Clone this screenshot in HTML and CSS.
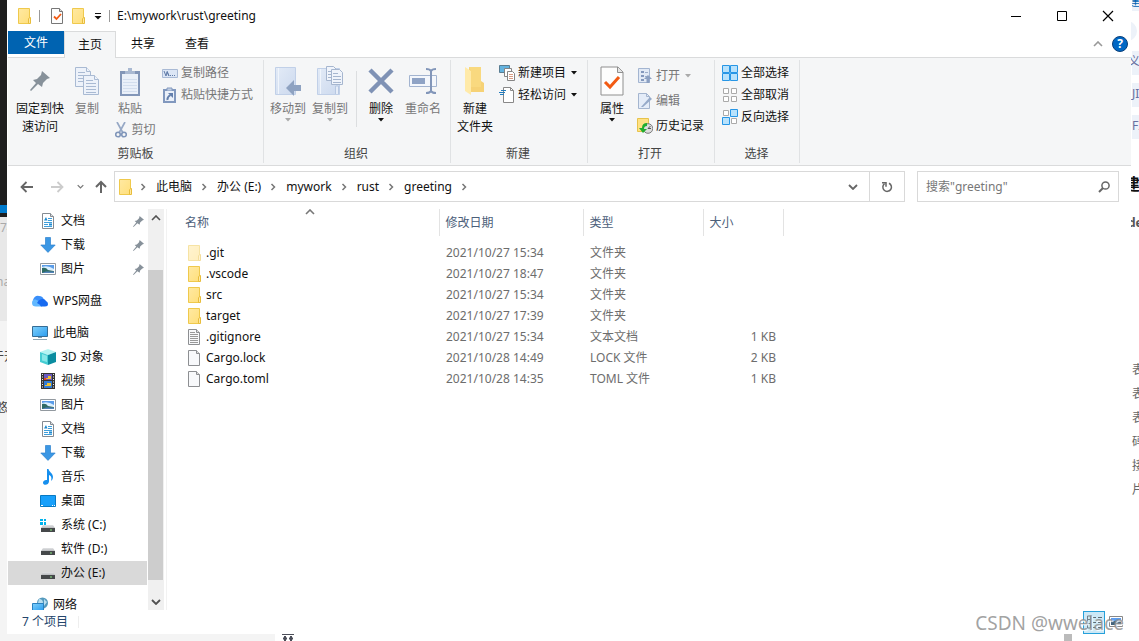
FILE: index.html
```html
<!DOCTYPE html>
<html lang="zh-CN">
<head>
<meta charset="utf-8">
<title>E:\mywork\rust\greeting</title>
<link rel="stylesheet" href="styles.css">
</head>
<body>
<svg class="defs" aria-hidden="true">
  <defs>
    <linearGradient id="gFolder" x1="0" y1="0" x2="1" y2="1"><stop offset="0" stop-color="#ffe9a2"/><stop offset="1" stop-color="#ffdf7b"/></linearGradient>
    <linearGradient id="gBlue" x1="0" y1="0" x2="1" y2="1"><stop offset="0" stop-color="#7fd0fb"/><stop offset="1" stop-color="#2a9df0"/></linearGradient>
    <linearGradient id="gPale" x1="0" y1="0" x2="1" y2="1"><stop offset="0" stop-color="#e3ebf7"/><stop offset="1" stop-color="#ccd9ee"/></linearGradient>
    <linearGradient id="gDrive" x1="0" y1="0" x2="0" y2="1"><stop offset="0" stop-color="#e2e3e5"/><stop offset="1" stop-color="#b9bbbe"/></linearGradient>
    <symbol id="folder" viewBox="0 0 14 16"><path d="M.5.5h11v15H.5z" fill="url(#gFolder)" stroke="#efc94c"/><path d="M10.5 15.500V11l1-1.500h1v6z" fill="#ffe9a2" stroke="#e8bd3c"/></symbol>
    <symbol id="page" viewBox="0 0 14 16"><path d="M.5.5h8l3 3v12H.5z" fill="#f8f9fb" stroke="#8d8f92"/><path d="M8.500.5v3h3" fill="#ddd" stroke="#8d8f92"/></symbol>
    <symbol id="text" viewBox="0 0 14 16"><use href="#page"/><path d="M2 5.500h8M2 7.500h8M2 9.500h8M2 11.500h8M2 13.500h8M2 3.500h5" stroke="#999"/></symbol>
    <symbol id="check" viewBox="0 0 24 30"><path d="M1 1h17l5 5v23H1z" fill="#fdfdfd" stroke="#8f8f8f"/><path d="M17.500 1v5.500H23" fill="#e4e4e4" stroke="#8f8f8f"/><path d="m5 16 5 5 9-10" fill="none" stroke="#f25a13" stroke-width="3"/></symbol>
    <symbol id="quickcheck" viewBox="0 0 14 16"><path d="M1.500.5h8l3 3v12h-11z" fill="#fdfdfd" stroke="#777"/><path d="M9.500.5v3h3" fill="#ddd" stroke="#777"/><path d="m4 8.500 2.500 2.500L11 6" fill="none" stroke="#f25a13" stroke-width="1.800"/></symbol>
    <symbol id="doc" viewBox="0 0 16 16"><path d="M2.500.5h8l3 3v12h-11z" fill="#fff" stroke="#858b92"/><path d="M10.500.5v3h3" fill="#ddd" stroke="#858b92"/><path d="M8 5.500h4M8 7.500h4M4 9.500h8M4 11.500h4M4 13.500h8" stroke="#3e9edb"/><path d="M4 7.500 6 4l1.500 3.500M9 10.500h3v2H9z" fill="#1d8ad0"/></symbol>
    <symbol id="down" viewBox="0 0 16 16"><path d="M5.500.5h5V8h4.700L8 15.400.8 8h4.700z" fill="#3b97e4" stroke="#2e83ce" stroke-width=".7"/></symbol>
    <symbol id="pic" viewBox="0 0 16 16"><path d="M.5 2.500h15v11H.5z" fill="#fff" stroke="#92999f"/><path d="M2 4h12v4H2z" fill="#5a9ce8"/><path d="M2 6q6-2 12 2v1H2z" fill="#d9efff"/><path d="M2 7q4-1 6 2l6 1v2H2z" fill="#2f6b65"/><path d="M6 10.500h8V12H2z" fill="#5384ba"/></symbol>
    <symbol id="cloud" viewBox="0 0 16 16"><path d="M1 7q2-5 6-4 4 0 5 4l-4 5-7-1z" fill="#3a8ffa"/><path d="M0 10q0-4 3.500-3.500Q7 7 10 13.500H4Q0 13.500 0 10Z" fill="#62b8ff"/><path d="M5 10q2-4 6-4 2 0 3 2 2 1 2 3 0 2.500-3 2.500H9Q8 11 5 10Z" fill="#176af0"/></symbol>
    <symbol id="pc" viewBox="0 0 16 16"><path d="M.5 1.500h15v10H.5z" fill="url(#gBlue)" stroke="#356c95"/><path d="M6 12h4v1H6z" fill="#7a9db1"/><path d="M1 14.500h14" stroke="#8fa7b5"/></symbol>
    <symbol id="cube" viewBox="0 0 16 16"><path d="m0 3 8-3 8 3-8 3z" fill="#b5f4f2"/><path d="m0 3 8 3v10l-8-3z" fill="#45cdd3"/><path d="m16 3-8 3v10l8-3z" fill="#0a8da0"/><path d="m2 5 5 1.700V13l-5-1.500z" fill="#87e8e8"/></symbol>
    <symbol id="film" viewBox="0 0 16 16"><path d="M1 0h14v16H1z" fill="#343434"/><path d="M4 1h8v6H4z" fill="#6a5ac1"/><path d="M4 8h8v7H4z" fill="#307bd5"/><path d="M5 5h3V3h3v3H5zM5 12h2v-2h4v3H5z" fill="#f0c22f"/><path d="M4 5h2l1 2H4z" fill="#db4333"/><path d="M2.500 1v14M13.500 1v14" stroke="#eee" stroke-dasharray="1 1.500"/></symbol>
    <symbol id="note" viewBox="0 0 16 16"><path d="M7 0h1.500c.5 3 4.500 4 4.500 8 0 2-1 3-2 4 1-4 0-5-2-6v6.500C9 15 6 16.500 4 15.500c-2-1-1-5 3-4.500z" fill="#168fee"/></symbol>
    <symbol id="desk" viewBox="0 0 16 16"><path d="M.5 2.500h15v11H.5z" fill="#18a0fb" stroke="#0879c2"/><path d="M1 12.500h2M12 12.500h1M14 12.500h1" stroke="#fff"/></symbol>
    <symbol id="drive" viewBox="0 0 16 16"><path d="m3 7-2 3h14l-2-3z" fill="url(#gDrive)"/><path d="M1 10h14v4H1z" fill="#45484a"/><path d="M10 12h2" stroke="#8ce883"/></symbol>
    <symbol id="sysdrive" viewBox="0 0 16 16"><use href="#drive" y="1"/><path d="M0 2h3v2H0zM4 2h2v2H4zM0 5h3v3H0zM4 5h2v3H4z" fill="#00b2ec"/></symbol>
    <symbol id="net" viewBox="0 0 16 16"><circle cx="10.500" cy="6" r="5.500" fill="#5499bd"/><path d="M7 2q4 0 4 4H6M12 2l3 3-3 4" fill="#b9def0"/><path d="M.5 6.500h11v7H.5z" fill="url(#gBlue)" stroke="#2a81c0"/><path d="M4 15h4" stroke="#6e96af"/></symbol>
    <symbol id="pin" viewBox="0 0 20 20"><path d="m12 0 8 7-3 1-4 4-1 4-4-3-7 7-1-1 6-7-3-3 4-1 4-4z" fill="#87919a"/></symbol>
    <symbol id="copy" viewBox="0 0 24 28"><g fill="#edf2fa" stroke="#a9bad3"><path d="M.5.5h11l4 4v15H.5z"/><path d="M11.500.5v4h4M3 5.500h7M3 8.500h9M3 11.500h9M3 14.500h9"/><path d="M8.500 8.500h11l4 4v15h-15z"/><path d="M19.500 8.500v4h4M11 13.500h7M11 16.500h10M11 19.500h10M11 22.500h10M11 25.500h10"/></g></symbol>
    <symbol id="paste" viewBox="0 0 20 29"><path d="M0 4h20v25H0z" fill="#8296b8"/><path d="M2 7h16v20H2z" fill="#eaf0f9"/><path d="M3 12.500h14M3 15.500h14M3 18.500h14M3 21.500h14M3 24.500h14" stroke="#d3deee"/><path d="M5 7V4h3V1h4v3h3v3z" fill="#a9b9d2"/></symbol>
    <symbol id="cut" viewBox="0 0 12 16"><path d="m2 0 6 11M10 0 4 11" stroke="#96a8c5" stroke-width="1.700"/><circle cx="3" cy="12.500" r="2.300" fill="none" stroke="#8096ba" stroke-width="1.600"/><circle cx="9" cy="12.500" r="2.300" fill="none" stroke="#8096ba" stroke-width="1.600"/></symbol>
    <symbol id="path" viewBox="0 0 16 16"><path d="M.5 4.500h15v8H.5z" fill="#dce6f5" stroke="#a9bad5"/><path d="m2 6 2 5 1-4 2 4M5 6l2 5" fill="none" stroke="#607ba7"/><path d="M8 10.500h6" stroke="#607ba7" stroke-dasharray="1 1"/></symbol>
    <symbol id="shortcut" viewBox="0 0 16 16"><path d="M2 3h11v12H2z" fill="#eaf0f9" stroke="#8198be" stroke-width="2"/><path d="M5 3.500V1h5v2.500" fill="#c1cee2" stroke="#8198be"/><path d="M5.500 13q-.5-3 3-5" fill="none" stroke="#637fac" stroke-width="2"/><path d="M6 6h5v5z" fill="#637fac"/></symbol>
    <symbol id="move" viewBox="0 0 28 30"><path d="M1.500 1.500h20v27h-20z" fill="url(#gPale)" stroke="#c1d0e8"/><path d="M4.500 2v26" stroke="#f0f5fc"/><path d="m12 22 8-8v5h7v6h-7v5z" fill="#8ea2c1"/></symbol>
    <symbol id="copyto" viewBox="0 0 28 30"><path d="M1.500 2.500h22v26h-22z" fill="url(#gPale)" stroke="#c1d0e8"/><path d="M4.500 3v25" stroke="#f0f5fc"/><path d="M19.500 28V20h3v8" fill="#e6edf8" stroke="#b7c8e2"/><g fill="#f0f4fb" stroke="#a6b6cf"><path d="M10.500.5h7l3 3v11h-10z"/><path d="M15.500 3.500h8l3 3v12h-11z"/><path d="M17 7.500h5M17 10.500h8M17 13.500h8M17 16.500h8M12 5.500h3M12 8.500h3M12 11.500h3"/></g></symbol>
    <symbol id="delete" viewBox="0 0 26 26"><path d="m2 2 22 22M24 2 2 24" stroke="#7f92b5" stroke-width="4.500"/></symbol>
    <symbol id="rename" viewBox="0 0 28 28"><path d="M.5 8.500h27v11H.5z" fill="#f4f7fc" stroke="#a3b4d0"/><path d="M3 11h13v6H3z" fill="#8fa3c5"/><path d="M17 2q4 0 5 2 1-2 5-2M22 3v22M17 26q4 0 5-2 1 2 5 2" fill="none" stroke="#8296b9" stroke-width="2"/></symbol>
    <symbol id="bigfolder" viewBox="0 0 20 28"><path d="M4 0h12v14l3 2v9H4z" fill="#f6d276"/><path d="m0 0 6 4v24l-6-4z" fill="#ffeaa9"/><path d="M4 0h12v20H6V4z" fill="#f9d97f"/></symbol>
    <symbol id="newitem" viewBox="0 0 16 16"><path d="M.5.5h10v7H.5z" fill="#64b3df" stroke="#597d92"/><path d="M5.500 3.500h7v8h-7z" fill="#fff" stroke="#858585"/><path d="M8.500 6.500h5l2 2v7h-7z" fill="#fff" stroke="#858585"/><path d="M10 9.500h4M10 11.500h4M10 13.500h4" stroke="#d89b83"/></symbol>
    <symbol id="access" viewBox="0 0 16 16"><path d="M4.500.5h7l3 3v12h-10z" fill="#fff" stroke="#888"/><path d="M11.500.5v3h3" fill="none" stroke="#888"/><path d="M2 3.500h5M0 5.500h6M1 7.500h4" stroke="#237cbd"/></symbol>
    <symbol id="open" viewBox="0 0 16 16"><path d="M1.500.5h11v14h-11z" fill="#e1e9f5" stroke="#a3b5d1"/><path d="M4 3h3v2H4zM4 7h3v2H4zM4 11h3v2H4z" fill="#8398bc"/><path d="M8 4.500h3M8 8.500h2" stroke="#9badc9"/><path d="m11 7 4 4h-2.500v4h-3v-4H7z" fill="#8ba0c2"/></symbol>
    <symbol id="edit" viewBox="0 0 16 16"><path d="M1.500.5h8l3 3v12h-11z" fill="#e4ecf8" stroke="#a4b5cf"/><path d="M9.500.5v3h3" fill="none" stroke="#a4b5cf"/><path d="m4 14 9-10 2 2-9 8z" fill="#96aac9"/></symbol>
    <symbol id="history" viewBox="0 0 16 16"><path d="M.5.5h11v13H.5z" fill="#ffe184" stroke="#e7c34b"/><circle cx="11" cy="10.500" r="4.800" fill="#ddd" stroke="#7b7b7b"/><path d="M11 10.500 13.500 8M11 10.500h3" fill="none" stroke="#555"/><path d="M10 5q-5 0-5 5H2l4 5 4-4H7q0-3 3-3z" fill="#22ad2f"/></symbol>
    <symbol id="all" viewBox="0 0 16 16"><g fill="#b8e2fc" stroke="#2796e6"><path d="M.5.5h7v7h-7zM8.500.5h7v7h-7zM.5 8.500h7v7h-7zM8.500 8.500h7v7h-7z"/></g></symbol>
    <symbol id="none" viewBox="0 0 16 16"><g fill="#fff" stroke="#aaa"><path d="M1.500 1.500h5v5h-5zM9.500 1.500h5v5h-5zM1.500 9.500h5v5h-5zM9.500 9.500h5v5h-5z"/></g></symbol>
    <symbol id="invert" viewBox="0 0 16 16"><g fill="#fff" stroke="#aaa"><path d="M1.500 1.500h5v5h-5zM9.500 9.500h5v5h-5z"/></g><g fill="#b8e2fc" stroke="#2796e6"><path d="M8.500.5h7v7h-7zM.5 8.500h7v7h-7z"/></g></symbol>
    <symbol id="caret" viewBox="0 0 6 4"><path d="M0 0h6L3 3.500z" fill="currentColor"/></symbol>
    <symbol id="chev" viewBox="0 0 8 8"><path d="m2.500 1 3 3-3 3" fill="none" stroke="currentColor" stroke-width="1.500"/></symbol>
    <symbol id="vee" viewBox="0 0 10 6"><path d="m1 1 4 4 4-4" fill="none" stroke="currentColor" stroke-width="1.800"/></symbol>
    <symbol id="peak" viewBox="0 0 10 6"><path d="m1 5 4-4 4 4" fill="none" stroke="currentColor" stroke-width="1.600"/></symbol>
    <symbol id="arrow" viewBox="0 0 14 12"><path d="M13 6H2M6.500 1 1.500 6l5 5" fill="none" stroke="currentColor" stroke-width="1.800"/></symbol>
    <symbol id="up" viewBox="0 0 12 14"><path d="M6 13V2M1 7l5-5 5 5" fill="none" stroke="currentColor" stroke-width="2"/></symbol>
  </defs>
</svg>

<div class="desktop">
  <div class="behind-left" aria-hidden="true">
    <div class="editor"></div><div class="editor-bar"></div><div class="editor-foot"></div>
    <div class="note-panel"><span class="frag">74</span><span class="frag frag-low">na</span></div>
    <div class="page-panel"><span class="frag frag-half">于开</span><span class="frag frag-next">悠</span></div>
  </div>

  <main class="window">
    <header class="titlebar">
      <svg class="i14"><use href="#folder"/></svg>
      <span class="bar"></span>
      <button class="quick" aria-label="属性"><svg class="i14"><use href="#quickcheck"/></svg></button>
      <button class="quick" aria-label="新建文件夹"><svg class="i14"><use href="#folder"/></svg></button>
      <button class="quick-more" aria-label="自定义快速访问工具栏"><svg width="8" height="8" viewBox="0 0 8 8"><path d="M1 1.500h6" stroke="#111"/><path d="M.5 4h7L4 7.500z" fill="#111"/></svg></button>
      <span class="bar"></span>
      <h1 class="title">E:\mywork\rust\greeting</h1>
      <div class="win-buttons">
        <button aria-label="最小化"><svg width="12" height="12"><path d="M1 6.500h10" stroke="#000"/></svg></button>
        <button aria-label="最大化"><svg width="12" height="12"><path d="M1.500 1.500h9v9h-9z" fill="none" stroke="#000"/></svg></button>
        <button aria-label="关闭"><svg width="12" height="12"><path d="m1 1 10 10M11 1 1 11" stroke="#000" stroke-width="1.200"/></svg></button>
      </div>
    </header>

    <nav class="tabs">
      <button class="tab tab-file">文件</button>
      <button class="tab tab-on">主页</button>
      <button class="tab">共享</button>
      <button class="tab">查看</button>
      <div class="tabs-end">
        <button aria-label="最小化功能区"><svg class="collapse" width="10" height="6"><use href="#peak"/></svg></button>
        <button class="help" aria-label="帮助">?</button>
      </div>
    </nav>

    <section class="ribbon">
      <div class="group g-clip">
        <div class="tools">
          <button class="big"><span class="pic"><svg width="20" height="20"><use href="#pin"/></svg></span>固定到快<br>速访问</button>
          <button class="big off"><span class="pic"><svg width="24" height="28"><use href="#copy"/></svg></span>复制</button>
          <div class="stack-paste">
            <button class="big off"><span class="pic"><svg width="20" height="29"><use href="#paste"/></svg></span>粘贴</button>
            <button class="small off cut"><svg width="12" height="16"><use href="#cut"/></svg>剪切</button>
          </div>
          <div class="stack">
            <button class="small off"><svg class="i16"><use href="#path"/></svg>复制路径</button>
            <button class="small off"><svg class="i16"><use href="#shortcut"/></svg>粘贴快捷方式</button>
          </div>
        </div>
        <div class="group-name">剪贴板</div>
      </div>
      <div class="group g-org">
        <div class="tools">
          <button class="big off"><span class="pic"><svg width="28" height="30"><use href="#move"/></svg></span>移动到<svg class="caret"><use href="#caret"/></svg></button>
          <button class="big off"><span class="pic"><svg width="28" height="30"><use href="#copyto"/></svg></span>复制到<svg class="caret"><use href="#caret"/></svg></button>
          <span class="split"></span>
          <button class="big"><span class="pic"><svg width="26" height="26"><use href="#delete"/></svg></span>删除<svg class="caret"><use href="#caret"/></svg></button>
          <button class="big off"><span class="pic"><svg width="28" height="28"><use href="#rename"/></svg></span>重命名</button>
        </div>
        <div class="group-name">组织</div>
      </div>
      <div class="group g-new">
        <div class="tools">
          <button class="big"><span class="pic"><svg width="20" height="28"><use href="#bigfolder"/></svg></span>新建<br>文件夹</button>
          <div class="stack">
            <button class="small"><svg class="i16"><use href="#newitem"/></svg>新建项目<svg class="caret"><use href="#caret"/></svg></button>
            <button class="small"><svg class="i16"><use href="#access"/></svg>轻松访问<svg class="caret"><use href="#caret"/></svg></button>
          </div>
        </div>
        <div class="group-name">新建</div>
      </div>
      <div class="group g-open">
        <div class="tools">
          <button class="big"><span class="pic"><svg width="24" height="30"><use href="#check"/></svg></span>属性<svg class="caret"><use href="#caret"/></svg></button>
          <div class="stack stack-wide">
            <button class="small off"><svg class="i16"><use href="#open"/></svg>打开<svg class="caret"><use href="#caret"/></svg></button>
            <button class="small off"><svg class="i16"><use href="#edit"/></svg>编辑</button>
            <button class="small"><svg class="i16"><use href="#history"/></svg>历史记录</button>
          </div>
        </div>
        <div class="group-name">打开</div>
      </div>
      <div class="group g-select">
        <div class="tools">
          <div class="stack">
            <button class="small"><svg class="i16"><use href="#all"/></svg>全部选择</button>
            <button class="small"><svg class="i16"><use href="#none"/></svg>全部取消</button>
            <button class="small"><svg class="i16"><use href="#invert"/></svg>反向选择</button>
          </div>
        </div>
        <div class="group-name">选择</div>
      </div>
    </section>

    <div class="navbar">
      <button class="nav" aria-label="后退"><svg width="14" height="12"><use href="#arrow"/></svg></button>
      <button class="nav nav-off" aria-label="前进"><svg class="flip" width="14" height="12"><use href="#arrow"/></svg></button>
      <button class="nav-recent" aria-label="最近浏览的位置"><svg width="7" height="5"><use href="#vee"/></svg></button>
      <button class="nav-up" aria-label="上移"><svg width="12" height="14"><use href="#up"/></svg></button>
      <div class="address">
        <svg class="i14"><use href="#folder"/></svg>
        <svg class="sep sep-first"><use href="#chev"/></svg><button>此电脑</button>
        <svg class="sep"><use href="#chev"/></svg><button>办公 (E:)</button>
        <svg class="sep"><use href="#chev"/></svg><button>mywork</button>
        <svg class="sep"><use href="#chev"/></svg><button>rust</button>
        <svg class="sep"><use href="#chev"/></svg><button>greeting</button>
        <svg class="sep"><use href="#chev"/></svg>
        <button class="addr-drop" aria-label="以前的位置"><svg width="10" height="6"><use href="#vee"/></svg></button>
        <button class="refresh" aria-label="刷新"><svg width="12" height="12" viewBox="0 0 12 12"><path d="M8 2.200a4.300 4.300 0 1 1-4.500.5" fill="none" stroke="#666" stroke-width="1.500"/><path d="M1 1.700h4v4" fill="none" stroke="#666" stroke-width="1.500"/></svg></button>
      </div>
      <label class="search">
        <input type="text" placeholder="搜索&quot;greeting&quot;" aria-label="搜索">
        <svg width="12" height="12" viewBox="0 0 12 12"><circle cx="7.500" cy="4.500" r="3.600" fill="none" stroke="#666" stroke-width="1.500"/><path d="m5 7-4 4" stroke="#666" stroke-width="2"/></svg>
      </label>
    </div>

    <div class="content">
      <nav class="tree">
        <a href="#" class="node sub"><svg class="i16"><use href="#doc"/></svg>文档<svg class="pinned"><use href="#pin"/></svg></a>
        <a href="#" class="node sub"><svg class="i16"><use href="#down"/></svg>下载<svg class="pinned"><use href="#pin"/></svg></a>
        <a href="#" class="node sub"><svg class="i16"><use href="#pic"/></svg>图片<svg class="pinned"><use href="#pin"/></svg></a>
        <a href="#" class="node root"><svg class="i16"><use href="#cloud"/></svg>WPS网盘</a>
        <a href="#" class="node root"><svg class="i16"><use href="#pc"/></svg>此电脑</a>
        <a href="#" class="node sub"><svg class="i16"><use href="#cube"/></svg>3D 对象</a>
        <a href="#" class="node sub"><svg class="i16"><use href="#film"/></svg>视频</a>
        <a href="#" class="node sub"><svg class="i16"><use href="#pic"/></svg>图片</a>
        <a href="#" class="node sub"><svg class="i16"><use href="#doc"/></svg>文档</a>
        <a href="#" class="node sub"><svg class="i16"><use href="#down"/></svg>下载</a>
        <a href="#" class="node sub"><svg class="i16"><use href="#note"/></svg>音乐</a>
        <a href="#" class="node sub"><svg class="i16"><use href="#desk"/></svg>桌面</a>
        <a href="#" class="node sub"><svg class="i16"><use href="#sysdrive"/></svg>系统 (C:)</a>
        <a href="#" class="node sub"><svg class="i16"><use href="#drive"/></svg>软件 (D:)</a>
        <a href="#" class="node sub node-on"><svg class="i16"><use href="#drive"/></svg>办公 (E:)</a>
        <a href="#" class="node root"><svg class="i16"><use href="#net"/></svg>网络</a>
      </nav>
      <div class="scroll">
        <button aria-label="向上滚动"><svg width="10" height="6"><use href="#peak"/></svg></button>
        <div class="track"></div><div class="thumb"></div><div class="rest"></div>
        <button aria-label="向下滚动"><svg width="10" height="6"><use href="#vee"/></svg></button>
      </div>
      <div class="files">
        <svg class="sort" width="10" height="6"><use href="#peak"/></svg>
        <table>
          <thead><tr><th class="c-name">名称</th><th class="c-date">修改日期</th><th class="c-type">类型</th><th class="c-size">大小</th></tr></thead>
          <tbody>
            <tr><td class="name"><svg class="i14 hidden-item"><use href="#folder"/></svg>.git</td><td>2021/10/27 15:34</td><td>文件夹</td><td class="size"></td></tr>
            <tr><td class="name"><svg class="i14"><use href="#folder"/></svg>.vscode</td><td>2021/10/27 18:47</td><td>文件夹</td><td class="size"></td></tr>
            <tr><td class="name"><svg class="i14"><use href="#folder"/></svg>src</td><td>2021/10/27 15:34</td><td>文件夹</td><td class="size"></td></tr>
            <tr><td class="name"><svg class="i14"><use href="#folder"/></svg>target</td><td>2021/10/27 17:39</td><td>文件夹</td><td class="size"></td></tr>
            <tr><td class="name"><svg class="i14"><use href="#text"/></svg>.gitignore</td><td>2021/10/27 15:34</td><td>文本文档</td><td class="size">1 KB</td></tr>
            <tr><td class="name"><svg class="i14"><use href="#page"/></svg>Cargo.lock</td><td>2021/10/28 14:49</td><td>LOCK 文件</td><td class="size">2 KB</td></tr>
            <tr><td class="name"><svg class="i14"><use href="#page"/></svg>Cargo.toml</td><td>2021/10/28 14:35</td><td>TOML 文件</td><td class="size">1 KB</td></tr>
          </tbody>
        </table>
      </div>
    </div>

    <footer class="status">
      <span class="count">7 个项目</span>
      <div class="views">
        <button class="view-on" aria-label="详细信息"><svg width="16" height="14"><path d="M1.500 1v12h3V1zM1 4.500h4M1 8.500h4" fill="none" stroke="#70818b"/><path d="M7 2.500h3M12 2.500h4M7 7.500h3M12 7.500h4M7 12.500h3M12 12.500h4" stroke="#5b6a73"/></svg></button>
        <button aria-label="大缩略图"><svg width="14" height="12"><path d="M.5.5h13v10H.5z" fill="#fff" stroke="#888"/><path d="M2 2h10v3H2z" fill="#5c9df0"/><path d="M2 5h10v4H2z" fill="#44637b"/></svg></button>
      </div>
    </footer>
  </main>

  <div class="behind-right" aria-hidden="true">
    <span class="chip chip-top">建</span><span class="dot"></span>
    <span class="chip">义</span><span class="chip chip-latin">JI</span><span class="chip chip-latin">FI</span>
    <span class="heading">建</span><span class="author">de</span>
    <span class="item item-first">表</span><span class="item">表</span><span class="item">表</span><span class="item">码</span><span class="item">接</span><span class="item">片</span>
  </div>

  <div class="behind-bottom" aria-hidden="true">
    <div class="bottom-page"></div>
    <svg width="14" height="7"><path d="M1 .5h12" stroke="#4a4d58"/><path d="M4 2v5M10 2v5M2 4.500h4M8 4.500h4" stroke="#4a4d58" stroke-width="2"/></svg>
    <div class="bottom-thumb"></div>
  </div>
  <div class="watermark">CSDN @wwelace</div>
</div>
</body>
</html>
```
FILE: styles.css
```css
* { box-sizing: border-box; }
body {
  margin: 0;
  font: 12px/18px "Noto Sans", "Noto Sans CJK SC", sans-serif;
  color: #111;
  background: #fff;
}
button {
  margin: 0;
  padding: 0;
  border: 0;
  background: none;
  color: inherit;
  font: inherit;
}
svg { display: block; flex: none; }
.defs { position: absolute; width: 0; height: 0; }
.i14 { width: 14px; height: 16px; }
.i16 { width: 16px; height: 16px; }
.caret { width: 6px; height: 4px; }

.desktop {
  position: relative;
  display: grid;
  grid-template-columns: 8px minmax(0, 1fr) 8px;
  grid-template-rows: minmax(0, 1fr) 7px;
  height: 100vh;
  overflow: hidden;
}
.window {
  display: flex;
  flex-direction: column;
  min-height: 0;
  background: #fff;
}

/* Windows underneath, visible at the edges */
.behind-left {
  display: flex;
  flex-direction: column;
  overflow: hidden;
  border-right: 1px solid #fff;
}
.editor { height: 205px; background: #1e1e1e; }
.editor-bar { height: 8px; background: #007acc; }
.editor-foot { height: 4px; background: #1e1e1e; }
.note-panel { height: 104px; overflow: hidden; background: #e8e8e8; color: #aaa; padding-top: 2px; }
.page-panel { flex: 1; overflow: hidden; background: #f4f4f4; color: #444; padding-top: 27px; }
.frag { display: block; white-space: nowrap; }
.frag-low { margin-top: 36px; text-indent: -4px; }
.frag-half { text-indent: -8px; }
.frag-next { margin-top: 33px; text-indent: -4px; }
.behind-right {
  display: flex;
  flex-direction: column;
  overflow: hidden;
  padding-left: 1px;
  white-space: nowrap;
}
.chip { height: 24px; flex: none; margin-bottom: 8px; background: #edf2f9; color: #6670a0; line-height: 22px; text-indent: -4px; }
.chip-latin { text-indent: 0; }
.chip-top { height: 11px; color: #0063b1; line-height: 4px; overflow: hidden; margin-bottom: 10px; }
.dot { width: 20px; height: 20px; flex: none; margin: 0 0 10px -15px; border-radius: 50%; background: #edf2f9; }
.heading { margin-top: 28px; font-size: 16px; font-weight: 700; text-indent: -8px; }
.author { margin-top: 21px; font-weight: 700; color: #555; text-indent: -4px; }
.item { height: 24px; flex: none; line-height: 24px; color: #666; }
.item-first { margin-top: 126px; }
.behind-bottom { grid-column: 1 / -1; display: flex; }
.bottom-page { width: 275px; margin-right: 6px; background: #f4f4f4; }
.bottom-thumb { width: 8px; margin: 0 67px 0 auto; background: #bbb; }

/* Title bar */
.titlebar { display: flex; align-items: center; height: 31px; padding-left: 10px; }
.bar { width: 1px; height: 12px; margin-left: 7px; background: #999; }
.quick { margin-left: 8px; }
.bar + .quick { margin-left: 10px; }
.quick-more { margin-left: 8px; }
.title { margin: 0 0 0 7px; font-size: 12px; font-weight: 400; }
.win-buttons { display: flex; margin-left: auto; }
.win-buttons button { display: grid; place-items: center; width: 46px; height: 31px; }

/* Tabs */
.tabs { display: flex; height: 27px; border-bottom: 1px solid #dadbdc; }
.tab { width: 54px; height: 26px; }
.tab-file { width: 56px; height: 23px; background: #0063b1; color: #fff; }
.tab-on { width: 52px; height: 27px; border: 1px solid #dadbdc; border-bottom: 0; background: #f5f6f7; }
.tabs-end { display: flex; align-items: center; gap: 9px; margin-left: auto; padding-right: 3px; }
.collapse { color: #999; }
.help {
  width: 16px;
  height: 16px;
  border: 1px solid #0a3f79;
  border-radius: 50%;
  background: #0067c4;
  color: #fff;
  font-weight: 700;
  line-height: 14px;
}

/* Ribbon */
.ribbon { display: flex; height: 108px; padding: 2px 0; background: #f5f6f7; border-bottom: 1px solid #dadbdc; }
.group { display: flex; flex-direction: column; border-right: 1px solid #e0e2e4; }
.g-clip { width: 256px; padding-left: 8px; }
.g-org { width: 187px; padding-left: 6px; }
.g-new { width: 137px; padding-left: 6px; }
.g-open { width: 127px; padding-left: 12px; }
.g-select { width: 85px; padding-left: 7px; }
.tools { display: flex; flex: 1; }
.group-name { text-align: center; color: #444; padding-right: 8px; }
.g-open .group-name { padding-right: 14px; }
.big { display: flex; flex-direction: column; align-items: center; padding-top: 5px; align-self: flex-start; }
.pic { display: grid; place-items: center; height: 32px; margin-bottom: 3px; }
.off { color: #777; }
.off .caret { color: #aaa; }
.g-clip .tools { gap: 11px; }
.stack-paste { display: flex; flex-direction: column; align-items: center; gap: 2px; width: 42px; margin-left: 4px; }
.stack-paste .big { align-self: auto; margin-right: 10px; }
.small { display: flex; align-items: center; gap: 3px; height: 22px; }
.cut { height: 20px; gap: 5px; }
.stack { display: flex; flex-direction: column; padding-top: 2px; }
.g-clip .stack { margin-left: -5px; }
.g-org .tools { gap: 6px; }
.split { width: 1px; height: 56px; margin: 11px 5px 0 2px; background: #dcdee0; }
.g-org .split + .big { margin-right: 5px; }
.g-new .tools { gap: 6px; }
.small .caret { margin-left: 2px; }
.g-open .tools { gap: 13px; }
.stack-wide { padding-top: 3px; }
.stack-wide .small { height: 25px; }

/* Navigation bar */
.navbar { display: flex; align-items: center; height: 43px; padding: 0 12px 2px; }
.nav { color: #666; margin-right: 16px; }
.nav-off { color: #ccc; margin-right: 13px; }
.flip { transform: scaleX(-1); }
.nav-recent { color: #777; }
.nav-up { margin: 0 7px 0 11px; color: #666; }
.address { display: flex; flex: 1; align-items: center; height: 31px; border: 1px solid #d9d9d9; padding-left: 4px; }
.sep { width: 8px; height: 8px; margin: 0 9px 0 8px; color: #777; }
.sep-first { margin-left: 6px; }
.addr-drop { display: grid; place-items: center; width: 32px; height: 29px; margin-left: auto; color: #666; }
.refresh { display: grid; place-items: center; width: 35px; height: 29px; border-left: 1px solid #d9d9d9; }
.search { display: flex; align-items: center; width: 202px; height: 31px; margin-left: 12px; padding: 0 8px; border: 1px solid #d9d9d9; }
.search input { flex: 1; min-width: 0; padding: 0; border: 0; outline: 0; font: inherit; background: none; }
.search input::placeholder { color: #777; opacity: 1; }

/* Folder tree */
.content { display: flex; flex: 1; min-height: 0; overflow: hidden; }
.tree { width: 139px; margin-right: 1px; overflow: hidden; }
.node { display: flex; align-items: center; gap: 5px; height: 24px; color: #111; text-decoration: none; white-space: nowrap; }
.sub { padding-left: 32px; }
.root { padding-left: 24px; margin-top: 8px; }
.node-on { background: #d9d9d9; }
.pinned { width: 11px; height: 11px; margin: 0 3px 0 auto; }
.scroll { display: flex; flex-direction: column; width: 16px; background: #f0f0f0; color: #505050; }
.scroll button { display: grid; place-items: center; height: 17px; }
.track { flex: 44; }
.thumb { flex: 310; width: 15px; background: #cdcdcd; }
.rest { flex: 13; }

/* File list */
.files { position: relative; flex: 1; margin-left: 2px; border-left: 1px solid #f2f2f2; }
.sort { position: absolute; left: 138px; top: 0; color: #777; }
table { width: 616px; border-collapse: collapse; table-layout: fixed; }
th { height: 27px; padding: 0 0 0 6px; border-right: 1px solid #e3e3e3; text-align: left; font-weight: 400; color: #4c607a; }
.c-name { width: 272px; padding-left: 18px; }
.c-date { width: 144px; }
.c-type { width: 120px; }
.c-size { width: 80px; }
tbody::before { content: ""; display: block; height: 6px; }
td { height: 21px; padding: 0 0 0 7px; line-height: 20px; color: #6d6d6d; }
.name { display: flex; align-items: center; gap: 4px; padding-left: 21px; color: #111; }
.size { padding-right: 7px; text-align: right; }
.hidden-item { opacity: .5; }

/* Status bar */
.status { display: flex; align-items: center; height: 24px; padding: 0 8px 0 14px; color: #24456b; }
.count { padding-right: 10px; border-right: 1px solid #eee; line-height: 12px; }
.views { display: flex; align-items: center; gap: 4px; margin-left: auto; }
.view-on { display: grid; place-items: center; width: 22px; height: 23px; border: 1px solid #26a0da; background: #cce8f6; }

.watermark {
  position: absolute;
  right: 15px;
  bottom: 5px;
  font-size: 19px;
  line-height: 26px;
  color: #8a8a8acc;
  text-shadow: 1px 1px 1px #fff;
}
```
